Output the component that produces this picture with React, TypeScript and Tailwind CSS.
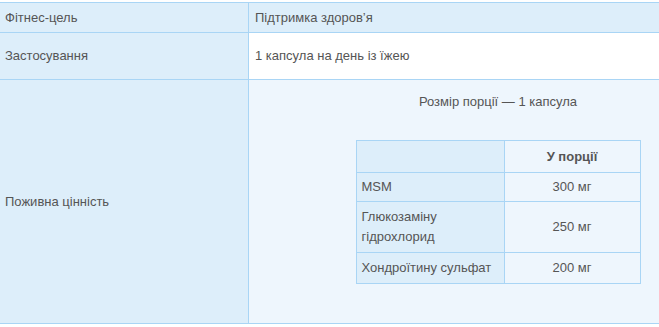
import React from "react";

const B = "border-[#a9d5f5]";

export default function App() {
  const rows = [
    { k: "MSM", v: "300 мг", h: "h-[29px]" },
    { k: "Глюкозаміну гідрохлорид", v: "250 мг", h: "h-[51px]" },
    { k: "Хондроїтину сульфат", v: "200 мг", h: "h-[30px]" },
  ];
  return (
    <div
      className="w-full overflow-hidden bg-white pt-[2px] text-[13px] text-[#555]"
      style={{ fontFamily: '"Liberation Sans", Arial, sans-serif' }}
    >
      <div className={`w-[747px] border-t ${B}`}>
        <div className={`flex h-[30px] border-b ${B}`}>
          <div className={`flex w-[249px] items-center border-r ${B} bg-[#ddeefa] pl-[5px]`}>Фітнес-цель</div>
          <div className="flex flex-1 items-center bg-[#ddeefa] pl-[6px]">Підтримка здоров’я</div>
        </div>
        <div className={`flex h-[47px] border-b ${B}`}>
          <div className={`flex w-[249px] items-center border-r ${B} bg-[#ddeefa] pl-[5px]`}>Застосування</div>
          <div className="flex flex-1 items-center bg-white pl-[6px]">1 капсула на день із їжею</div>
        </div>
        <div className={`flex h-[244px] border-b ${B}`}>
          <div className={`flex w-[249px] items-center border-r ${B} bg-[#ddeefa] pl-[5px]`}>Поживна цінність</div>
          <div className="flex flex-1 flex-col items-center bg-[#eef6fd] pt-[12px]">
            <div className="leading-[20px]">Розмір порції — 1 капсула</div>
            <div className={`mt-[28px] w-[285px] border ${B}`}>
              <div className={`flex h-[32px] border-b ${B}`}>
                <div className={`w-[148px] border-r ${B} bg-[#ddeefa]`} />
                <div className="flex flex-1 items-center justify-center bg-[#eef6fd] font-bold">У порції</div>
              </div>
              {rows.map((r, i) => (
                <div key={i} className={`flex ${r.h} ${i < rows.length - 1 ? `border-b ${B}` : ""}`}>
                  <div className={`flex w-[148px] items-center border-r ${B} bg-[#ddeefa] pl-[5px] leading-[20px]`}>
                    {r.k}
                  </div>
                  <div className="flex flex-1 items-center justify-center bg-[#eef6fd]">{r.v}</div>
                </div>
              ))}
            </div>
          </div>
        </div>
      </div>
    </div>
  );
}
